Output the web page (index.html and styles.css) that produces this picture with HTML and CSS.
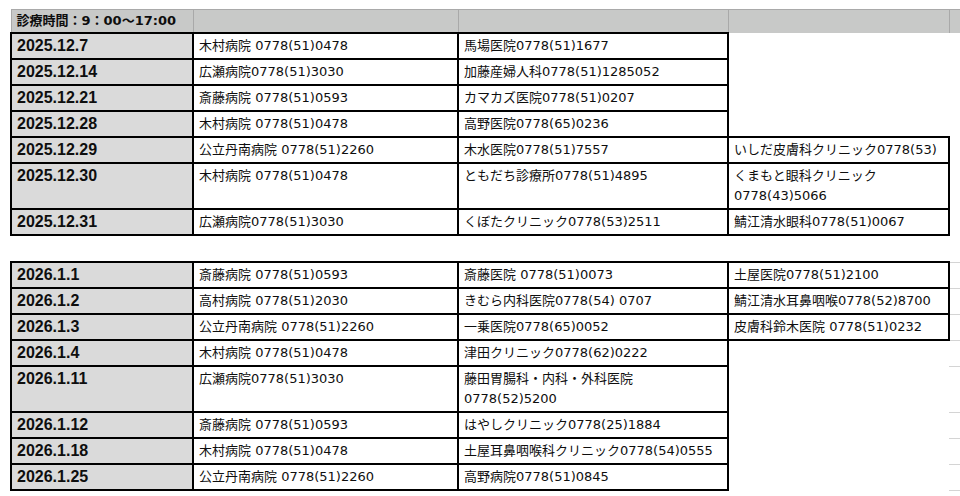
FILE: index.html
```html
<!DOCTYPE html>
<html lang="ja">
<head>
<meta charset="utf-8">
<title>診療時間</title>
<link rel="stylesheet" href="styles.css">
</head>
<body>
<div class="sheet">
  <table class="grid first">
    <colgroup><col class="c-date"><col class="c-a"><col class="c-b"><col class="c-c"><col class="c-x"></colgroup>
    <thead>
      <tr class="hdr"><th class="hdr-title">診療時間：9：00〜17:00</th><th></th><th></th><th></th><th></th></tr>
    </thead>
    <tbody>
      <tr><td class="date">2025.12.7</td><td>木村病院 0778(51)0478</td><td>馬場医院0778(51)1677</td><td class="none"></td><td class="none"></td></tr>
      <tr><td class="date">2025.12.14</td><td>広瀬病院0778(51)3030</td><td>加藤産婦人科0778(51)1285052</td><td class="none"></td><td class="none"></td></tr>
      <tr><td class="date">2025.12.21</td><td>斎藤病院 0778(51)0593</td><td>カマカズ医院0778(51)0207</td><td class="none"></td><td class="none"></td></tr>
      <tr><td class="date">2025.12.28</td><td>木村病院 0778(51)0478</td><td>高野医院0778(65)0236</td><td class="none"></td><td class="none"></td></tr>
      <tr><td class="date">2025.12.29</td><td>公立丹南病院 0778(51)2260</td><td>木水医院0778(51)7557</td><td>いしだ皮膚科クリニック0778(53)</td><td class="none"></td></tr>
      <tr><td class="date">2025.12.30</td><td>木村病院 0778(51)0478</td><td>ともだち診療所0778(51)4895</td><td>くまもと眼科クリニック<br>0778(43)5066</td><td class="none"></td></tr>
      <tr><td class="date">2025.12.31</td><td>広瀬病院0778(51)3030</td><td>くぼたクリニック0778(53)2511</td><td>鯖江清水眼科0778(51)0067</td><td class="none"></td></tr>
    </tbody>
  </table>

  <table class="grid second">
    <colgroup><col class="c-date"><col class="c-a"><col class="c-b"><col class="c-c"><col class="c-x"></colgroup>
    <tbody>
      <tr><td class="date">2026.1.1</td><td>斎藤病院 0778(51)0593</td><td>斎藤医院 0778(51)0073</td><td>土屋医院0778(51)2100</td><td class="gl"></td></tr>
      <tr><td class="date">2026.1.2</td><td>高村病院 0778(51)2030</td><td>きむら内科医院0778(54) 0707</td><td>鯖江清水耳鼻咽喉0778(52)8700</td><td class="gl"></td></tr>
      <tr><td class="date">2026.1.3</td><td>公立丹南病院 0778(51)2260</td><td>一乗医院0778(65)0052</td><td>皮膚科鈴木医院 0778(51)0232</td><td class="gl"></td></tr>
      <tr><td class="date">2026.1.4</td><td>木村病院 0778(51)0478</td><td>津田クリニック0778(62)0222</td><td class="none"></td><td class="gl"></td></tr>
      <tr><td class="date">2026.1.11</td><td>広瀬病院0778(51)3030</td><td>藤田胃腸科・内科・外科医院<br>0778(52)5200</td><td class="none"></td><td class="gl"></td></tr>
      <tr><td class="date">2026.1.12</td><td>斎藤病院 0778(51)0593</td><td>はやしクリニック0778(25)1884</td><td class="none"></td><td class="gl"></td></tr>
      <tr><td class="date">2026.1.18</td><td>木村病院 0778(51)0478</td><td>土屋耳鼻咽喉科クリニック0778(54)0555</td><td class="none"></td><td class="gl"></td></tr>
      <tr><td class="date">2026.1.25</td><td>公立丹南病院 0778(51)2260</td><td>高野病院0778(51)0845</td><td class="none"></td><td class="gl"></td></tr>
    </tbody>
  </table>
</div>
</body>
</html>
```

FILE: styles.css
```css
html, body {
  margin: 0;
  padding: 0;
  background: #ffffff;
}

.sheet {
  padding: 9px 0 0 10px;
  width: 950px;
}

.grid {
  border-collapse: collapse;
  table-layout: fixed;
  width: 950px;
  color: #0e0e0e;
}

.c-date { width: 182px; }
.c-a { width: 265px; }
.c-b { width: 270px; }
.c-c { width: 221px; }
.c-x { width: 12px; }

.hdr th {
  background: #c8c9c8;
  border-top: 1px solid #a9a9a9;
  border-left: 1px solid #a9a9a9;
  border-right: 1px solid #a9a9a9;
  height: 22px;
  padding: 0 0 0 5px;
  text-align: left;
  font-family: "DejaVu Sans", "Noto Sans CJK JP", sans-serif;
  font-weight: bold;
  font-size: 13px;
  line-height: 22px;
  white-space: nowrap;
}

.grid td {
  border: 2px solid #000000;
  padding: 2px 4px 2px 5px;
  font-family: "DejaVu Sans", "Noto Sans CJK JP", sans-serif;
  font-size: 13px;
  line-height: 20px;
  vertical-align: top;
  white-space: nowrap;
  overflow: hidden;
}

.grid td.date {
  background: #dadada;
  font-family: "Liberation Sans", "Noto Sans CJK JP", sans-serif;
  font-weight: bold;
  font-size: 16px;
}

.grid td.none {
  border: none;
  background: transparent;
}

.grid td.gl {
  border-left: none;
  border-right: none;
  border-top: 1px solid #d4d4d4;
  border-bottom: 1px solid #d4d4d4;
  padding: 0;
}

.second {
  margin-top: 25px;
}
```
